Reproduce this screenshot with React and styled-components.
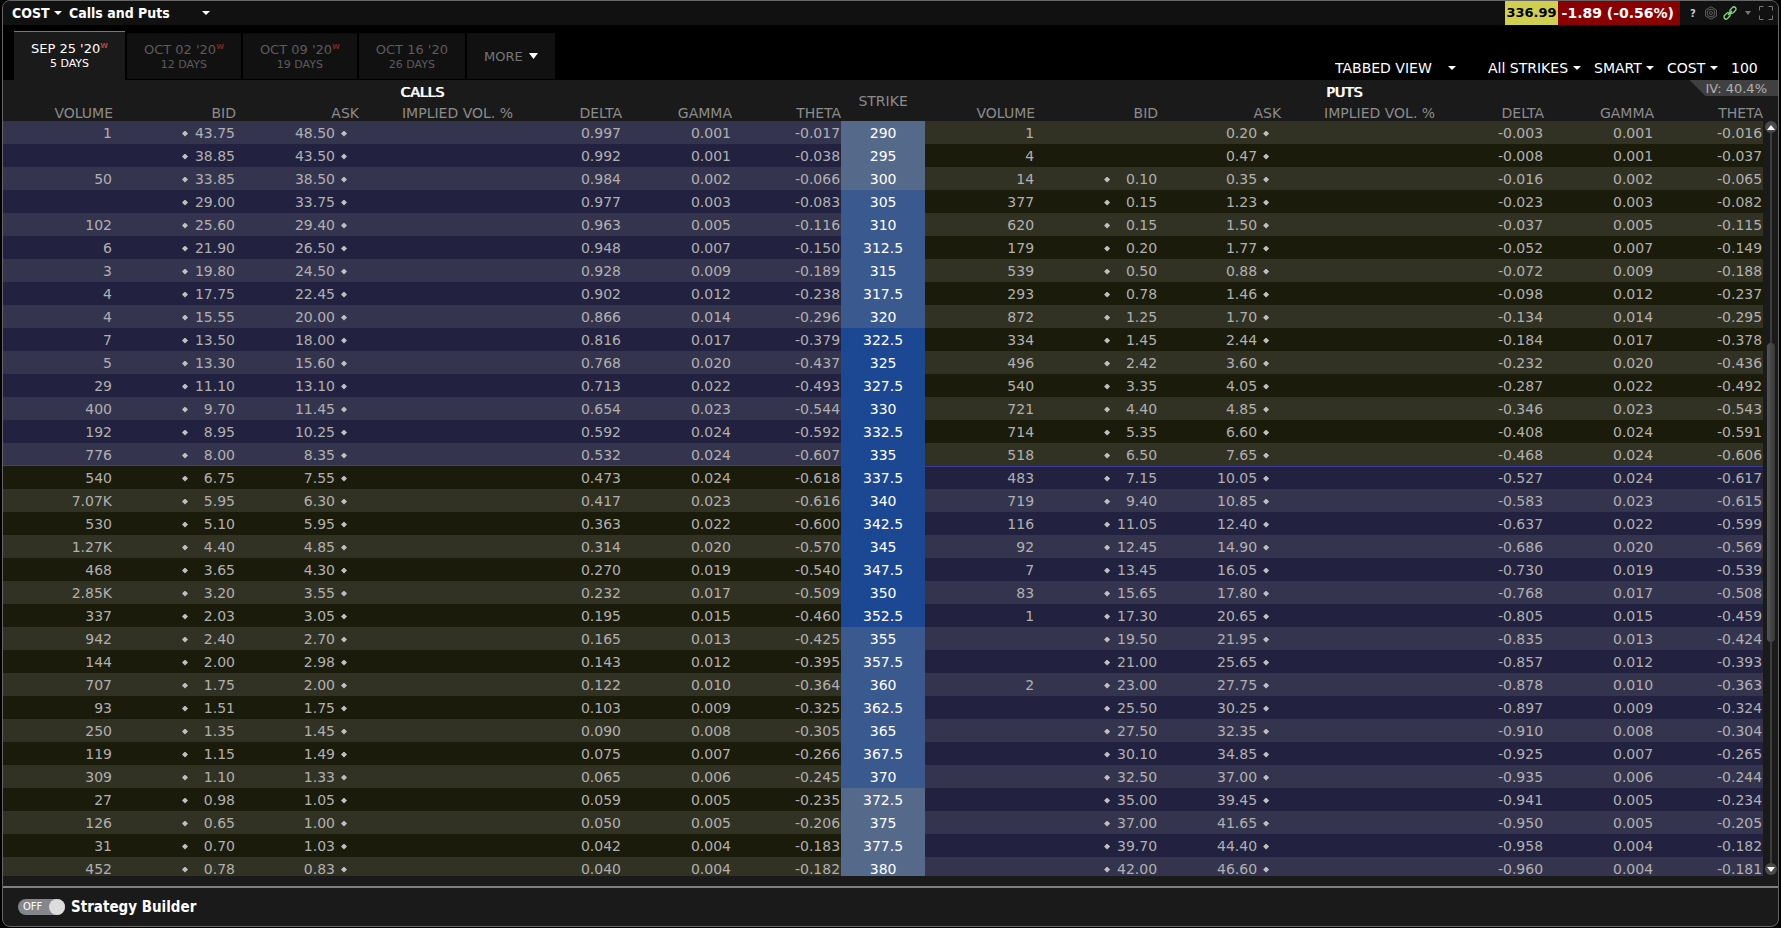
import React, { useState } from 'react';
import styled, { createGlobalStyle } from 'styled-components';

// volume, bid, ask, delta, gamma, theta
const rows = [
	['290', ['1', '43.75', '48.50', '0.997', '0.001', '-0.017'], ['1', '', '0.20', '-0.003', '0.001', '-0.016']],
	['295', ['', '38.85', '43.50', '0.992', '0.001', '-0.038'], ['4', '', '0.47', '-0.008', '0.001', '-0.037']],
	['300', ['50', '33.85', '38.50', '0.984', '0.002', '-0.066'], ['14', '0.10', '0.35', '-0.016', '0.002', '-0.065']],
	['305', ['', '29.00', '33.75', '0.977', '0.003', '-0.083'], ['377', '0.15', '1.23', '-0.023', '0.003', '-0.082']],
	['310', ['102', '25.60', '29.40', '0.963', '0.005', '-0.116'], ['620', '0.15', '1.50', '-0.037', '0.005', '-0.115']],
	['312.5', ['6', '21.90', '26.50', '0.948', '0.007', '-0.150'], ['179', '0.20', '1.77', '-0.052', '0.007', '-0.149']],
	['315', ['3', '19.80', '24.50', '0.928', '0.009', '-0.189'], ['539', '0.50', '0.88', '-0.072', '0.009', '-0.188']],
	['317.5', ['4', '17.75', '22.45', '0.902', '0.012', '-0.238'], ['293', '0.78', '1.46', '-0.098', '0.012', '-0.237']],
	['320', ['4', '15.55', '20.00', '0.866', '0.014', '-0.296'], ['872', '1.25', '1.70', '-0.134', '0.014', '-0.295']],
	['322.5', ['7', '13.50', '18.00', '0.816', '0.017', '-0.379'], ['334', '1.45', '2.44', '-0.184', '0.017', '-0.378']],
	['325', ['5', '13.30', '15.60', '0.768', '0.020', '-0.437'], ['496', '2.42', '3.60', '-0.232', '0.020', '-0.436']],
	['327.5', ['29', '11.10', '13.10', '0.713', '0.022', '-0.493'], ['540', '3.35', '4.05', '-0.287', '0.022', '-0.492']],
	['330', ['400', '9.70', '11.45', '0.654', '0.023', '-0.544'], ['721', '4.40', '4.85', '-0.346', '0.023', '-0.543']],
	['332.5', ['192', '8.95', '10.25', '0.592', '0.024', '-0.592'], ['714', '5.35', '6.60', '-0.408', '0.024', '-0.591']],
	['335', ['776', '8.00', '8.35', '0.532', '0.024', '-0.607'], ['518', '6.50', '7.65', '-0.468', '0.024', '-0.606']],
	['337.5', ['540', '6.75', '7.55', '0.473', '0.024', '-0.618'], ['483', '7.15', '10.05', '-0.527', '0.024', '-0.617']],
	['340', ['7.07K', '5.95', '6.30', '0.417', '0.023', '-0.616'], ['719', '9.40', '10.85', '-0.583', '0.023', '-0.615']],
	['342.5', ['530', '5.10', '5.95', '0.363', '0.022', '-0.600'], ['116', '11.05', '12.40', '-0.637', '0.022', '-0.599']],
	['345', ['1.27K', '4.40', '4.85', '0.314', '0.020', '-0.570'], ['92', '12.45', '14.90', '-0.686', '0.020', '-0.569']],
	['347.5', ['468', '3.65', '4.30', '0.270', '0.019', '-0.540'], ['7', '13.45', '16.05', '-0.730', '0.019', '-0.539']],
	['350', ['2.85K', '3.20', '3.55', '0.232', '0.017', '-0.509'], ['83', '15.65', '17.80', '-0.768', '0.017', '-0.508']],
	['352.5', ['337', '2.03', '3.05', '0.195', '0.015', '-0.460'], ['1', '17.30', '20.65', '-0.805', '0.015', '-0.459']],
	['355', ['942', '2.40', '2.70', '0.165', '0.013', '-0.425'], ['', '19.50', '21.95', '-0.835', '0.013', '-0.424']],
	['357.5', ['144', '2.00', '2.98', '0.143', '0.012', '-0.395'], ['', '21.00', '25.65', '-0.857', '0.012', '-0.393']],
	['360', ['707', '1.75', '2.00', '0.122', '0.010', '-0.364'], ['2', '23.00', '27.75', '-0.878', '0.010', '-0.363']],
	['362.5', ['93', '1.51', '1.75', '0.103', '0.009', '-0.325'], ['', '25.50', '30.25', '-0.897', '0.009', '-0.324']],
	['365', ['250', '1.35', '1.45', '0.090', '0.008', '-0.305'], ['', '27.50', '32.35', '-0.910', '0.008', '-0.304']],
	['367.5', ['119', '1.15', '1.49', '0.075', '0.007', '-0.266'], ['', '30.10', '34.85', '-0.925', '0.007', '-0.265']],
	['370', ['309', '1.10', '1.33', '0.065', '0.006', '-0.245'], ['', '32.50', '37.00', '-0.935', '0.006', '-0.244']],
	['372.5', ['27', '0.98', '1.05', '0.059', '0.005', '-0.235'], ['', '35.00', '39.45', '-0.941', '0.005', '-0.234']],
	['375', ['126', '0.65', '1.00', '0.050', '0.005', '-0.206'], ['', '37.00', '41.65', '-0.950', '0.005', '-0.205']],
	['377.5', ['31', '0.70', '1.03', '0.042', '0.004', '-0.183'], ['', '39.70', '44.40', '-0.958', '0.004', '-0.182']],
	['380', ['452', '0.78', '0.83', '0.040', '0.004', '-0.182'], ['', '42.00', '46.60', '-0.960', '0.004', '-0.181']],
];

const tabs = [
	{ date: "SEP 25 '20", days: '5 DAYS', weekly: true },
	{ date: "OCT 02 '20", days: '12 DAYS', weekly: true },
	{ date: "OCT 09 '20", days: '19 DAYS', weekly: true },
	{ date: "OCT 16 '20", days: '26 DAYS', weekly: false },
];

const columns = ['VOLUME', 'BID', 'ASK', 'IMPLIED VOL. %', 'DELTA', 'GAMMA', 'THETA'];
const columnWidths = [110, 123, 123, 154, 109, 110, 109];
const lastPrice = 336.99;

const strikeColor = (strike) => {
	const distance = Math.abs(strike - 337.5);
	if (distance > 33) return '#55698a';
	if (distance > 15) return '#39598f';
	return '#1b4793';
};

const Caret = ({ width = 8, height = 4, color = '#fff' }) => (
	<svg width={width} height={height} viewBox="0 0 8 4" preserveAspectRatio="none" aria-hidden="true">
		<path d="M0 0h8L4 4z" fill={color} />
	</svg>
);

const Dropdown = ({ label, value, bold, space = 12 }) => (
	<Picker>
		<Select aria-label={label} $bold={bold} $space={space}>
			<option>{value}</option>
		</Select>
		<Caret />
	</Picker>
);

const Side = ({ values, itm, even, line }) => {
	const [volume, bid, ask, delta, gamma, theta] = values;
	return (
		<>
			<Cell $itm={itm} $even={even} $line={line}>{volume}</Cell>
			<Cell $itm={itm} $even={even} $line={line}>
				{bid && <Bid><Diamond />{bid}</Bid>}
			</Cell>
			<Cell $itm={itm} $even={even} $line={line}>
				{ask && <Ask>{ask}<Diamond /></Ask>}
			</Cell>
			<Cell $itm={itm} $even={even} $line={line} />
			<Cell $itm={itm} $even={even} $line={line}>{delta}</Cell>
			<Cell $itm={itm} $even={even} $line={line}>{gamma}</Cell>
			<Cell $itm={itm} $even={even} $line={line}>{theta}</Cell>
		</>
	);
};

const Chain = () => (
	<Table>
		<colgroup>
			{columnWidths.map((width, i) => <col key={i} width={width} />)}
			<col width={84} />
			{columnWidths.map((width, i) => <col key={i} width={width} />)}
		</colgroup>
		<thead>
			<tr>
				<SideHead colSpan={7} scope="colgroup">CALLS</SideHead>
				<StrikeHead rowSpan={2} scope="col">STRIKE</StrikeHead>
				<SideHead colSpan={7} scope="colgroup">PUTS</SideHead>
			</tr>
			<tr>
				{columns.map((name) => <Head key={name} scope="col">{name}</Head>)}
				{columns.map((name) => <Head key={name} scope="col">{name}</Head>)}
			</tr>
		</thead>
		<tbody>
			{rows.map(([strike, calls, puts], i) => {
				const callItm = Number(strike) < lastPrice;
				return (
					<tr key={strike}>
						<Side values={calls} itm={callItm} even={i % 2 === 0} line={strike === '335' ? 'bottom' : ''} />
						<Strike $color={strikeColor(Number(strike))} scope="row">{strike}</Strike>
						<Side values={puts} itm={!callItm} even={i % 2 === 0} line={strike === '337.5' ? 'top' : ''} />
					</tr>
				);
			})}
		</tbody>
	</Table>
);

export default function App() {
	const [active, setActive] = useState(0);
	const [quantity, setQuantity] = useState('100');
	const [builder, setBuilder] = useState(false);

	return (
		<>
			<GlobalStyle />
			<Frame>
				<TitleBar>
					<Dropdown label="Symbol" value="COST" bold />
					<Dropdown label="Option type" value="Calls and Puts" bold space={40} />
					<Quote>
						<Last>336.99</Last>
						<Change>-1.89 (-0.56%)</Change>
					</Quote>
					<Tools>
						<Tool type="button" aria-label="Help">?</Tool>
						<Tool type="button" aria-label="Settings">
							<svg width="14" height="14" viewBox="0 0 14 14" fill="none" stroke="#606060">
								<path d="M7 .8l5.400 3.100v6.200L7 13.200l-5.400-3.100V3.900z" />
								<circle cx="7" cy="7" r="3.800" />
								<circle cx="7" cy="7" r="1.500" />
							</svg>
						</Tool>
						<Tool type="button" aria-label="Link group">
							<svg width="14" height="14" viewBox="0 0 14 14" fill="none" stroke="#86e086" strokeWidth="1.300">
								<rect x="-3.600" y="-2.100" width="7.200" height="4.200" rx="2.100" transform="translate(9.900 4.100) rotate(-47)" />
								<rect x="-3.600" y="-2.100" width="7.200" height="4.200" rx="2.100" transform="translate(4.100 9.900) rotate(-47)" />
								<path d="M5 9l4-4" />
							</svg>
						</Tool>
						<Tool type="button" aria-label="Link menu">
							<Caret width={6} color="#777" />
						</Tool>
						<Tool type="button" aria-label="Maximize">
							<svg width="14" height="14" viewBox="0 0 14 14" fill="none" stroke="#777">
								<path d="M.5 4.500v-4h4M9.500.5h4v4M13.500 9.500v4h-4M4.500 13.500h-4v-4" />
							</svg>
						</Tool>
					</Tools>
				</TitleBar>

				<Expiries>
					<Tabs role="tablist">
						{tabs.map((tab, i) => (
							<Tab
								key={tab.date}
								type="button"
								role="tab"
								aria-selected={i === active}
								$active={i === active}
								onClick={() => setActive(i)}
							>
								<span>{tab.date}{tab.weekly && <Weekly $active={i === active}>W</Weekly>}</span>
								<Days>{tab.days}</Days>
							</Tab>
						))}
						<More type="button">MORE <Caret width={9} height={6} /></More>
					</Tabs>
					<Options>
						<Dropdown label="View" value="TABBED VIEW" space={24} />
						<OptionGroup>
							<Dropdown label="Strikes" value="All STRIKES" />
							<Dropdown label="Exchange" value="SMART" />
							<Dropdown label="Trading class" value="COST" />
							<Quantity
								aria-label="Multiplier"
								value={quantity}
								onChange={(e) => setQuantity(e.target.value)}
							/>
						</OptionGroup>
					</Options>
				</Expiries>

				<Panel>
					<Chain />
					<Volatility>IV: 40.4%</Volatility>
					<Scrollbar>
						<ScrollButton type="button" aria-label="Scroll up" $up><Caret height={5} /></ScrollButton>
						<Track>
							<Gap $size={210} />
							<Thumb />
							<Gap $size={221} />
						</Track>
						<ScrollButton type="button" aria-label="Scroll down"><Caret height={5} /></ScrollButton>
					</Scrollbar>
				</Panel>

				<Footer>
					<Builder>
						<Switch $on={builder}>
							<input
								type="checkbox"
								role="switch"
								checked={builder}
								onChange={(e) => setBuilder(e.target.checked)}
							/>
							<span>{builder ? 'ON' : 'OFF'}</span>
							<Knob />
						</Switch>
						Strategy Builder
					</Builder>
				</Footer>
			</Frame>
		</>
	);
}

const GlobalStyle = createGlobalStyle`
	* {
		box-sizing: border-box;
	}

	body {
		margin: 0;
		background: #000;
		font-family: "DejaVu Sans", Verdana, sans-serif;
		font-size: 14px;
		color: #b0b0b0;
	}

	button, select, input {
		margin: 0;
		padding: 0;
		border: 0;
		background: none;
		color: inherit;
		font: inherit;
	}
`;

const Frame = styled.main`
	display: flex;
	flex-direction: column;
	height: calc(100vh - 1px);
	margin: 0 2px;
	border: 1px solid #666;
	border-radius: 8px;
	background: #1a1a1a;
	overflow: hidden;
`;

const TitleBar = styled.header`
	display: flex;
	flex: none;
	align-items: center;
	height: 24px;
	padding: 0 5px 0 9px;
	gap: 7px;
	background: #111;
`;

const Picker = styled.span`
	display: inline-grid;
	align-items: center;

	> * {
		grid-area: 1 / 1;
	}

	svg {
		justify-self: end;
		pointer-events: none;
	}
`;

const Select = styled.select`
	appearance: none;
	padding-right: ${(p) => p.$space}px;
	color: #fff;
	font-family: ${(p) => (p.$bold ? '"DejaVu Sans Condensed", "DejaVu Sans", sans-serif' : 'inherit')};
	font-weight: ${(p) => (p.$bold ? 700 : 400)};

	option {
		background: #1a1a1a;
	}
`;

const Quote = styled.div`
	display: flex;
	align-self: stretch;
	margin-left: auto;
	line-height: 24px;
	font-weight: 700;
`;

const Last = styled.span`
	padding: 0 1px;
	background: #cfcf50;
	color: #000;
	font-size: 13px;
`;

const Change = styled.span`
	padding: 0 6px 0 4px;
	background: #8a0000;
	color: #fff;
`;

const Tools = styled.div`
	display: flex;
	align-items: center;
	gap: 5px;
`;

const Tool = styled.button`
	display: grid;
	place-items: center;
	min-width: 12px;
	height: 20px;
	color: #ccc;
	font-size: 10px;
	font-weight: 700;
`;

const Expiries = styled.nav`
	display: flex;
	flex: none;
	align-items: flex-end;
	justify-content: space-between;
	height: 55px;
	padding-left: 11px;
	background: #000;
`;

const Tabs = styled.div`
	display: flex;
	align-items: flex-end;
	gap: 2px;
`;

const Tab = styled.button`
	display: flex;
	flex-direction: column;
	align-items: center;
	justify-content: center;
	height: ${(p) => (p.$active ? 49 : 46)}px;
	margin-bottom: ${(p) => (p.$active ? 0 : 1)}px;
	padding: 0 17px;
	border-top: 1px solid ${(p) => (p.$active ? '#777' : '#0b0b0b')};
	background: ${(p) => (p.$active ? '#1a1a1a' : '#111')};
	color: ${(p) => (p.$active ? '#fff' : '#5c5c5c')};
	font-size: 13px;
	line-height: 15px;
	white-space: nowrap;
`;

const Days = styled.span`
	font-size: 11px;
`;

const Weekly = styled.sup`
	color: ${(p) => (p.$active ? '#b04040' : '#7c2424')};
	font-size: 7px;
	font-weight: 700;
	line-height: 0;
`;

const More = styled.button`
	display: flex;
	align-items: center;
	gap: 6px;
	height: 46px;
	margin-bottom: 1px;
	padding: 0 17px;
	background: #111;
	color: #777;
	font-size: 13px;
`;

const Options = styled.div`
	display: flex;
	gap: 32px;
	padding-bottom: 4px;
`;

const OptionGroup = styled.div`
	display: flex;
	gap: 13px;
`;

const Quantity = styled.input`
	width: 47px;
	color: #fff;
`;

const Panel = styled.section`
	position: relative;
	display: flex;
	flex: 1;
	min-height: 0;
	overflow: hidden;
`;

const Table = styled.table`
	flex: 1;
	align-self: flex-start;
	width: 100%;
	table-layout: fixed;
	border-collapse: collapse;

	th, td {
		padding: 0;
		white-space: nowrap;
	}
`;

const SideHead = styled.th`
	height: 24px;
	color: #fff;
	font-weight: 400;
	text-shadow: 1px 0 #fff;
`;

const StrikeHead = styled.th`
	color: #8c8c8c;
	font-weight: 400;
`;

const Head = styled.th`
	height: 17px;
	color: #8c8c8c;
	font-weight: 400;
	line-height: 15px;
	text-align: right;

	&& {
		padding-top: 2px;
	}
`;

const lines = {
	top: 'inset 0 1px #3a3a9c',
	bottom: 'inset 0 -1px #3a3a9c',
};

const Cell = styled.td`
	height: 23px;
	background: ${(p) => (p.$itm ? (p.$even ? '#35344f' : '#222240') : (p.$even ? '#323224' : '#1b1b0b'))};
	box-shadow: ${(p) => lines[p.$line] || 'none'};
	line-height: 21px;
	text-align: right;

	&& {
		padding: 2px 1px 0 0;
	}
`;

const Strike = styled.th`
	background: ${(p) => p.$color};
	color: #fff;
	font-weight: 400;
	line-height: 21px;

	&& {
		padding-top: 2px;
	}
`;

const Bid = styled.span`
	display: flex;
	align-items: center;
	justify-content: space-between;
	width: 53px;
	margin-left: auto;
`;

const Ask = styled.span`
	display: flex;
	align-items: center;
	justify-content: flex-end;
	gap: 6px;
	padding-right: 11px;
`;

const Diamond = styled.i`
	width: 6px;
	height: 6px;
	background: #c0c0c0;
	clip-path: polygon(50% 0, 100% 50%, 50% 100%, 0 50%);
`;

const Volatility = styled.div`
	position: absolute;
	top: 0;
	right: 0;
	height: 16px;
	padding: 0 11px 0 16px;
	background: #404040;
	clip-path: polygon(0 0, 100% 0, 100% 100%, 16px 100%);
	font-size: 13px;
	line-height: 17px;
`;

const Scrollbar = styled.div`
	display: flex;
	flex: none;
	flex-direction: column;
	align-items: center;
	width: 15px;
	padding: 41px 0 1px;
`;

const ScrollButton = styled.button`
	display: grid;
	place-items: center;
	width: 12px;
	height: 12px;
	border-radius: 50%;
	background: #4a4a4a;

	svg {
		transform: ${(p) => (p.$up ? 'rotate(180deg)' : 'none')};
	}
`;

const Track = styled.div`
	display: flex;
	flex: 1;
	flex-direction: column;
	align-items: center;
`;

const Gap = styled.div`
	flex: ${(p) => p.$size} 0 0;
	width: 2px;
	background: #3c3c3c;
`;

const Thumb = styled.div`
	flex: 298 0 0;
	width: 8px;
	border-radius: 4px;
	background: linear-gradient(90deg, #555, #383838);
`;

const Footer = styled.footer`
	flex: none;
	margin-top: 10px;
	padding: 10px 15px 10px;
	border-top: 2px solid #808080;
`;

const Builder = styled.label`
	display: flex;
	align-items: center;
	gap: 6px;
	color: #fff;
	font-family: "DejaVu Sans Condensed", "DejaVu Sans", sans-serif;
	font-size: 15px;
	font-weight: 700;
	line-height: 18px;
`;

const Switch = styled.span`
	display: flex;
	flex-direction: ${(p) => (p.$on ? 'row-reverse' : 'row')};
	align-items: center;
	justify-content: space-between;
	width: 47px;
	height: 16px;
	padding-left: ${(p) => (p.$on ? 0 : 5)}px;
	border-radius: 8px;
	background: #83878b;
	font-family: "DejaVu Sans", sans-serif;
	font-size: 10px;
	font-weight: 400;

	input {
		position: absolute;
		opacity: 0;
	}
`;

const Knob = styled.i`
	width: 16px;
	height: 16px;
	border-radius: 50%;
	background: #dcdcdc;
`;
